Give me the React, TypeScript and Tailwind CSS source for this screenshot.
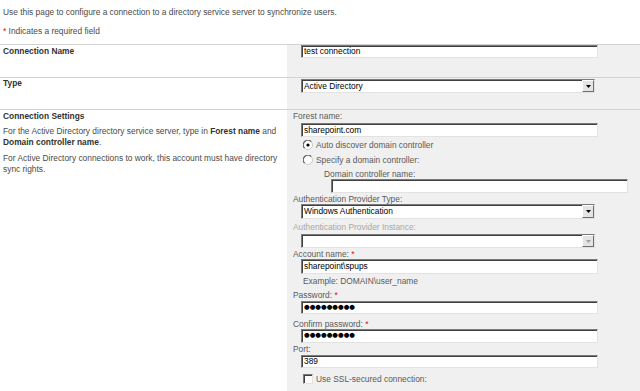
import React from "react";

const inset =
  "border border-t-[#7a7a7a] border-l-[#7a7a7a] border-b-[#e2e2e2] border-r-[#e2e2e2] shadow-[inset_1px_1px_0_#404040] bg-white";

function TextBox({ value, className, dots }: { value?: string; className?: string; dots?: boolean }) {
  return (
    <div className={`${inset} ${className ?? ""} flex items-center pl-[2px] text-black overflow-hidden whitespace-pre`}>
      {dots ? <span className="text-[6.5px] font-['DejaVu_Sans']">{value}</span> : value}
    </div>
  );
}

function Select({ value, className, disabled }: { value?: string; className?: string; disabled?: boolean }) {
  return (
    <div className={`${inset} ${className ?? ""} flex items-center text-black`}>
      <span className="flex-1 pl-[2px] overflow-hidden whitespace-nowrap">{value}</span>
      <span className="w-[12px] h-full bg-[#e4e4e4] border border-t-white border-l-white border-b-[#6f6f6f] border-r-[#6f6f6f] flex items-center justify-center">
        <svg width="5" height="3" viewBox="0 0 5 3">
          <path d="M0 0h5L2.5 3z" fill={disabled ? "#a0a0a0" : "#000"} />
        </svg>
      </span>
    </div>
  );
}

function Radio({ checked }: { checked?: boolean }) {
  return (
    <svg width="10" height="10" viewBox="0 0 10 10" className="shrink-0">
      <circle cx="5" cy="5" r="4.5" fill="#fff" stroke="#c8c8c8" />
      <path d="M1.6 8.2A4.3 4.3 0 0 1 8.2 1.6" fill="none" stroke="#5a5a5a" strokeWidth="1.2" />
      {checked && <circle cx="5" cy="5" r="1.6" fill="#000" />}
    </svg>
  );
}

function Star() {
  return <span className="text-[#e00000]"> *</span>;
}

export default function App() {
  return (
    <div className="w-[640px] h-[391px] bg-white overflow-hidden font-['Liberation_Sans',Arial,sans-serif] text-[8.4px] text-[#4a4a4a]">
      <div className="h-[44px] pl-[3px]">
        <p className="pt-[6px] leading-[12px]">
          Use this page to configure a connection to a directory service server to synchronize users.
        </p>
        <p className="mt-[7px] leading-[12px]">
          <span className="text-[#e00000]">*</span> Indicates a required field
        </p>
      </div>

      <div className="flex h-[33px] border-t border-[#d2d2d2]">
        <div className="w-[287px] pl-[3px] font-bold text-[#333] leading-[12px]">Connection Name</div>
        <div className="flex-1 bg-[#f0f0f0]">
          <TextBox value="test connection" className="ml-[14px] w-[297px] h-[13px]" />
        </div>
      </div>

      <div className="flex h-[32px] border-t border-[#d2d2d2]">
        <div className="w-[287px] pl-[3px] font-bold text-[#333] leading-[10px]">Type</div>
        <div className="flex-1 bg-[#f0f0f0]">
          <Select value="Active Directory" className="mt-[1px] ml-[14px] w-[294px] h-[14px]" />
        </div>
      </div>

      <div className="flex h-[282px] border-t border-[#d2d2d2]">
        <div className="w-[287px] pl-[3px]">
          <div className="font-bold text-[#333] leading-[12px]">Connection Settings</div>
          <p className="mt-[4px] leading-[11px]">
            For the Active Directory directory service server, type in <b className="text-[#333]">Forest name</b> and
            <br />
            <b className="text-[#333]">Domain controller name</b>.
          </p>
          <p className="mt-[5px] leading-[11px]">
            For Active Directory connections to work, this account must have directory
            <br />
            sync rights.
          </p>
        </div>
        <div className="flex-1 bg-[#f0f0f0] flex flex-col text-[#5a5a5a]">
          <div className="pl-[6px] leading-[12px] h-[12px]">Forest name:</div>
          <TextBox value="sharepoint.com" className="mt-[1px] ml-[14px] w-[297px] h-[14px]" />
          <div className="mt-[1px] h-[14px] ml-[16px] flex items-center gap-[3px]">
            <Radio checked />
            <span>Auto discover domain controller</span>
          </div>
          <div className="mt-[1px] h-[14px] ml-[16px] flex items-center gap-[3px]">
            <Radio />
            <span>Specify a domain controller:</span>
          </div>
          <div className="mt-[1px] pl-[37px] leading-[12px] h-[11px]">Domain controller name:</div>
          <TextBox className="ml-[44px] w-[297px] h-[14px]" />
          <div className="pl-[6px] leading-[12px] h-[11px]">Authentication Provider Type:</div>
          <Select value="Windows Authentication" className="ml-[14px] w-[294px] h-[15px]" />
          <div className="mt-[2px] pl-[6px] leading-[12px] h-[13px] text-[#a8a8a8]">
            Authentication Provider Instance:
          </div>
          <Select className="ml-[14px] w-[294px] h-[14px]" disabled />
          <div className="pl-[6px] leading-[12px] h-[11px]">
            Account name:
            <Star />
          </div>
          <TextBox value={"sharepoint\\spups"} className="ml-[14px] w-[297px] h-[15px]" />
          <div className="mt-[1px] pl-[16px] leading-[12px] h-[12px]">{"Example: DOMAIN\\user_name"}</div>
          <div className="mt-[2px] pl-[6px] leading-[12px] h-[12px]">
            Password:
            <Star />
          </div>
          <TextBox value="●●●●●●●●●" dots className="ml-[14px] w-[297px] h-[13px]" />
          <div className="mt-[4px] pl-[6px] leading-[12px] h-[11px]">
            Confirm password:
            <Star />
          </div>
          <TextBox value="●●●●●●●●●" dots className="ml-[14px] w-[297px] h-[14px]" />
          <div className="pl-[6px] leading-[12px] h-[12px]">Port:</div>
          <TextBox value="389" className="ml-[14px] w-[297px] h-[13px]" />
          <div className="mt-[5px] h-[12px] ml-[16px] flex items-center gap-[3px]">
            <span className={`${inset} w-[10px] h-[10px]`} />
            <span>Use SSL-secured connection:</span>
          </div>
        </div>
      </div>
    </div>
  );
}
